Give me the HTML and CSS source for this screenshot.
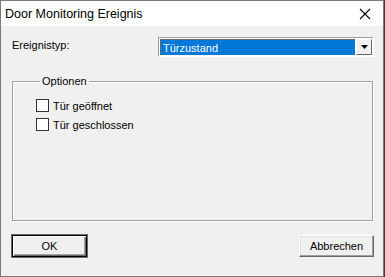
FILE: index.html
```html
<!DOCTYPE html>
<html lang="de">
<head>
  <meta charset="UTF-8">
  <title>Door Monitoring Ereignis</title>
  <link rel="stylesheet" href="styles.css">
</head>
<body>
  <div class="window">
    <!-- Title bar -->
    <div class="titlebar">
      <span class="title">Door Monitoring Ereignis</span>
      <svg class="close" width="12" height="12" viewBox="0 0 12 12">
        <path d="M1 1 L11 11 M11 1 L1 11" stroke="#000" stroke-width="1.1" fill="none"/>
      </svg>
    </div>

    <!-- Dialog body -->
    <div class="body">
      <div class="type-row">
        <label class="label">Ereignistyp:</label>
        <div class="combo">
          <span class="combo-value">Türzustand</span>
          <span class="combo-btn">
            <svg width="7" height="4" viewBox="0 0 7 4"><path d="M0 0 H7 L3.5 4 Z" fill="#000"/></svg>
          </span>
        </div>
      </div>

      <fieldset class="group">
        <legend>Optionen</legend>
        <div class="check"><span class="box"></span>Tür geöffnet</div>
        <div class="check"><span class="box"></span>Tür geschlossen</div>
      </fieldset>

      <div class="buttons">
        <button class="btn default">OK</button>
        <button class="btn">Abbrechen</button>
      </div>
    </div>
  </div>
</body>
</html>
```

FILE: styles.css
```css
/* Base */
html, body {
  margin: 0;
  padding: 0;
  background: #3c3c3c;
}

.window {
  width: 384px;
  height: 277px;
  box-sizing: border-box;
  border: 1px solid #7a7a7a;
  background: #f0f0f0;
  display: flex;
  flex-direction: column;
  font-family: "Liberation Sans", Arial, sans-serif;
  font-size: 11px;
  color: #000;
}

/* Title bar */
.titlebar {
  height: 25px;
  background: #fff;
  display: flex;
  align-items: center;
  justify-content: space-between;
  padding: 0 12px 0 4px;
}

.title {
  font-family: "Liberation Sans", Arial, sans-serif;
  font-size: 12.5px;
  padding-top: 1px;
}

/* Content */
.body {
  flex: 1;
  padding: 11px 9px 0 11px;
  display: flex;
  flex-direction: column;
}

.type-row {
  display: flex;
  justify-content: space-between;
  align-items: flex-start;
}

.label {
  padding-top: 2px;
}

.combo {
  width: 216px;
  height: 20px;
  box-sizing: border-box;
  border: 1px solid;
  border-color: #a0a0a0 #fff #fff #a0a0a0;
  display: flex;
  align-items: stretch;
  background: #fff;
}

.combo-value {
  flex: 1;
  margin: 1px 1px 1px 1px;
  border-top: 1px solid #696969;
  border-left: 1px solid #696969;
  background: #0078d7;
  color: #fff;
  padding-left: 2px;
  line-height: 16px;
}

.combo-btn {
  width: 16px;
  margin: 1px 1px 1px 0;
  box-sizing: border-box;
  background: #f0f0f0;
  border: 1px solid;
  border-color: #fff #696969 #696969 #fff;
  display: flex;
  align-items: center;
  justify-content: center;
}

/* Group box */
.group {
  margin: 18px 1px 0 0;
  height: 146px;
  box-sizing: border-box;
  border: 1px solid #a0a0a0;
  box-shadow: inset 1px 1px 0 #fff, 1px 1px 0 #fff;
  padding: 9px 0 0 23px;
}

.group legend {
  padding: 0 2px;
  margin-left: 4px;
}

.check {
  display: flex;
  align-items: center;
  height: 19px;
}

.box {
  width: 13px;
  height: 13px;
  box-sizing: border-box;
  border: 1px solid #333;
  background: #fff;
  margin-right: 4px;
}

/* Buttons */
.buttons {
  display: flex;
  justify-content: space-between;
  margin-top: 14px;
  padding-right: 0;
}

.btn {
  width: 75px;
  height: 22px;
  box-sizing: border-box;
  background: #f0f0f0;
  border: 1px solid;
  border-color: #fff #696969 #696969 #fff;
  box-shadow: inset -1px -1px 0 #a0a0a0, inset 1px 1px 0 #e3e3e3;
  font-family: "Liberation Sans", Arial, sans-serif;
  font-size: 11px;
  color: #000;
  padding: 0;
}

.btn.default {
  border: 1px solid #000;
  box-shadow: inset 1px 1px 0 #fff, inset -1px -1px 0 #696969, inset -2px -2px 0 #a0a0a0;
  outline: 1px solid #696969;
}
```
